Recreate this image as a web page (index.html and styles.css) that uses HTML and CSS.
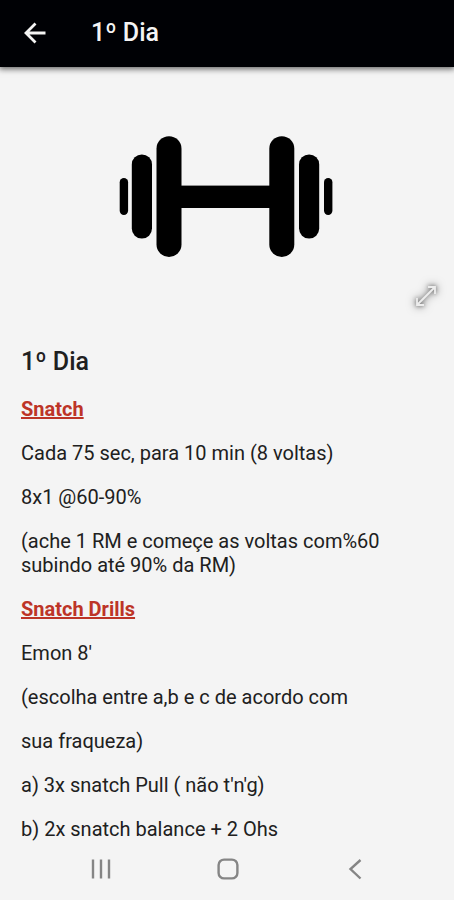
FILE: index.html
```html
<!DOCTYPE html>
<html lang="pt-BR">
<head>
<meta charset="utf-8">
<meta name="viewport" content="width=device-width, initial-scale=1">
<title>1º Dia</title>
<link rel="stylesheet" href="styles.css">
</head>
<body>
<header class="app-bar">
  <button class="icon-button" type="button" aria-label="Voltar">
    <svg width="24" height="24" viewBox="0 0 24 24" fill="none" stroke="currentColor" stroke-width="2.8"><path d="M22.500 12H3M12.500 2.500 3 12l9.500 9.500"/></svg>
  </button>
  <h1 class="app-title">1º Dia</h1>
</header>
<main class="content">
  <section class="hero">
    <svg class="dumbbell" width="216" height="122" viewBox="119 136 216 122" aria-hidden="true">
      <rect x="119.7" y="178" width="8.4" height="37" rx="4.2"/>
      <rect x="131.8" y="154.4" width="20.2" height="84.2" rx="10.1"/>
      <rect x="156.5" y="136.2" width="25" height="120.8" rx="12.5"/>
      <rect x="175" y="185.6" width="100" height="22.4"/>
      <rect x="269.3" y="136.2" width="25" height="120.8" rx="12.5"/>
      <rect x="299" y="154.4" width="20.2" height="84.2" rx="10.1"/>
      <rect x="324" y="178" width="8.4" height="37" rx="4.2"/>
    </svg>
    <button class="icon-button expand" type="button" aria-label="Ampliar imagem">
      <svg width="24" height="24" viewBox="0 0 24 24" fill="none" stroke="currentColor" stroke-width="1.8"><path d="M3 21 21 3M14 3h7v7M3 14v7h7"/></svg>
    </button>
  </section>
  <article class="workout">
    <h2 class="heading">1º Dia</h2>
    <h3 class="exercise">Snatch</h3>
    <p>Cada 75 sec, para 10 min (8 voltas)</p>
    <p>8x1 @60-90%</p>
    <p>(ache 1 RM e começe as voltas com%60 subindo até 90% da RM)</p>
    <h3 class="exercise">Snatch Drills</h3>
    <p>Emon 8'</p>
    <p>(escolha entre a,b e c de acordo com</p>
    <p>sua fraqueza)</p>
    <p>a) 3x snatch Pull ( não t'n'g)</p>
    <p>b) 2x snatch balance + 2 Ohs</p>
  </article>
</main>
<nav class="system-nav" aria-label="Sistema">
  <button class="icon-button" type="button" aria-label="Recentes">
    <svg width="24" height="24" viewBox="0 0 24 24" fill="none" stroke="currentColor" stroke-width="2.4"><path d="M4 2.500v19M12 2.500v19M20 2.500v19"/></svg>
  </button>
  <button class="icon-button" type="button" aria-label="Início">
    <svg width="24" height="24" viewBox="0 0 24 24" fill="none" stroke="currentColor" stroke-width="2.4"><rect x="2.6" y="2.600" width="18.800" height="18.800" rx="5.500"/></svg>
  </button>
  <button class="icon-button" type="button" aria-label="Voltar">
    <svg width="24" height="24" viewBox="0 0 24 24" fill="none" stroke="currentColor" stroke-width="2.4"><path d="M17.500 3 7.500 12l10 9.500"/></svg>
  </button>
</nav>
</body>
</html>
```
FILE: styles.css
```css
* {
  box-sizing: border-box;
}

body {
  margin: 0;
  min-height: 100vh;
  display: flex;
  flex-direction: column;
  background: #f4f4f4;
  color: #202020;
  font-family: Roboto, "Liberation Sans", sans-serif;
  font-size: 20px;
  line-height: 24px;
}

h1,
h2,
h3,
p {
  margin: 0;
}

.icon-button {
  display: flex;
  padding: 0;
  border: 0;
  background: none;
  color: inherit;
}

.app-bar {
  display: flex;
  align-items: center;
  gap: 44px;
  padding: 18px 23px 19px;
  background: #000105;
  color: #f4f4f4;
  box-shadow: 0 1px 6px 1px rgba(0, 0, 0, 0.6);
}

.app-title {
  font-size: 25px;
  line-height: 30px;
  font-weight: 500;
}

.content {
  flex: 1;
}

.hero {
  display: flex;
  flex-direction: column;
  align-items: center;
  gap: 26px;
  padding: 69px 16px 0;
}

.dumbbell {
  max-width: 100%;
}

.expand {
  align-self: flex-end;
  color: #ededed;
  filter: drop-shadow(0 0 2px rgba(0, 0, 0, 0.5)) drop-shadow(0 0 4px rgba(0, 0, 0, 0.5));
}

.workout {
  display: flex;
  flex-direction: column;
  gap: 20px;
  padding: 39px 21px 0;
}

.heading {
  font-size: 25px;
  line-height: 30px;
  font-weight: 500;
}

.exercise {
  font-size: 20px;
  font-weight: 700;
  color: #bd3427;
  text-decoration: underline;
}

.system-nav {
  display: grid;
  grid-template-columns: repeat(3, 1fr);
  justify-items: center;
  padding: 15px 36px 19px 38px;
  color: #858585;
}
```
